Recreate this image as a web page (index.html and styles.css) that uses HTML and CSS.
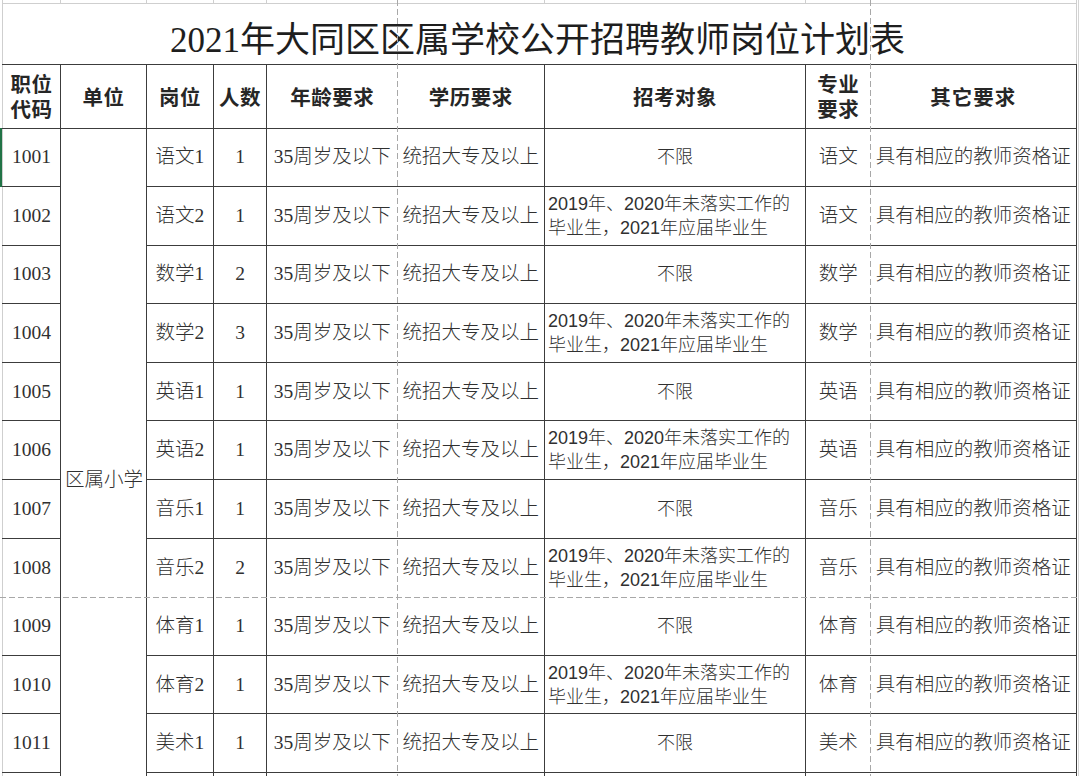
FILE: index.html
```html
<!DOCTYPE html>
<html lang="zh">
<head>
<meta charset="utf-8">
<title>2021年大同区区属学校公开招聘教师岗位计划表</title>
<link rel="stylesheet" href="styles.css">
</head>
<body>
<div class="sheet">
  <table class="plan">
    <colgroup>
      <col class="w1"><col class="w2"><col class="w3"><col class="w4"><col class="w5"><col class="w6"><col class="w7"><col class="w8"><col class="w9">
    </colgroup>
    <tr class="strip">
      <td class="g"></td><td class="g"></td><td class="g"></td><td class="g"></td><td class="g c5"></td><td class="g"></td><td class="g"></td><td class="g c8"></td><td class="g gr"></td>
    </tr>
    <tr class="title-row">
      <td class="title" colspan="9">2021年大同区区属学校公开招聘教师岗位计划表</td>
    </tr>
    <tr class="head">
      <th class="first">职位<br>代码</th>
      <th>单位</th>
      <th>岗位</th>
      <th>人数</th>
      <th class="c5">年龄要求</th>
      <th>学历要求</th>
      <th>招考对象</th>
      <th class="c8">专业<br>要求</th>
      <th class="sp">其它要求</th>
    </tr>
    <tr class="row">
      <td class="first">1001</td>
      <td class="unit" rowspan="12">区属小学</td>
      <td>语文1</td><td>1</td><td class="c5">35周岁及以下</td><td>统招大专及以上</td>
      <td class="obj">不限</td><td class="c8">语文</td><td class="other">具有相应的教师资格证</td>
    </tr>
    <tr class="row">
      <td class="first">1002</td>
      <td>语文2</td><td>1</td><td class="c5">35周岁及以下</td><td>统招大专及以上</td>
      <td class="obj multi">2019年、2020年未落实工作的<br>毕业生，2021年应届毕业生</td><td class="c8">语文</td><td class="other">具有相应的教师资格证</td>
    </tr>
    <tr class="row">
      <td class="first">1003</td>
      <td>数学1</td><td>2</td><td class="c5">35周岁及以下</td><td>统招大专及以上</td>
      <td class="obj">不限</td><td class="c8">数学</td><td class="other">具有相应的教师资格证</td>
    </tr>
    <tr class="row">
      <td class="first">1004</td>
      <td>数学2</td><td>3</td><td class="c5">35周岁及以下</td><td>统招大专及以上</td>
      <td class="obj multi">2019年、2020年未落实工作的<br>毕业生，2021年应届毕业生</td><td class="c8">数学</td><td class="other">具有相应的教师资格证</td>
    </tr>
    <tr class="row">
      <td class="first">1005</td>
      <td>英语1</td><td>1</td><td class="c5">35周岁及以下</td><td>统招大专及以上</td>
      <td class="obj">不限</td><td class="c8">英语</td><td class="other">具有相应的教师资格证</td>
    </tr>
    <tr class="row">
      <td class="first">1006</td>
      <td>英语2</td><td>1</td><td class="c5">35周岁及以下</td><td>统招大专及以上</td>
      <td class="obj multi">2019年、2020年未落实工作的<br>毕业生，2021年应届毕业生</td><td class="c8">英语</td><td class="other">具有相应的教师资格证</td>
    </tr>
    <tr class="row">
      <td class="first">1007</td>
      <td>音乐1</td><td>1</td><td class="c5">35周岁及以下</td><td>统招大专及以上</td>
      <td class="obj">不限</td><td class="c8">音乐</td><td class="other">具有相应的教师资格证</td>
    </tr>
    <tr class="row brk">
      <td class="first">1008</td>
      <td>音乐2</td><td>2</td><td class="c5">35周岁及以下</td><td>统招大专及以上</td>
      <td class="obj multi">2019年、2020年未落实工作的<br>毕业生，2021年应届毕业生</td><td class="c8">音乐</td><td class="other">具有相应的教师资格证</td>
    </tr>
    <tr class="row">
      <td class="first">1009</td>
      <td>体育1</td><td>1</td><td class="c5">35周岁及以下</td><td>统招大专及以上</td>
      <td class="obj">不限</td><td class="c8">体育</td><td class="other">具有相应的教师资格证</td>
    </tr>
    <tr class="row">
      <td class="first">1010</td>
      <td>体育2</td><td>1</td><td class="c5">35周岁及以下</td><td>统招大专及以上</td>
      <td class="obj multi">2019年、2020年未落实工作的<br>毕业生，2021年应届毕业生</td><td class="c8">体育</td><td class="other">具有相应的教师资格证</td>
    </tr>
    <tr class="row">
      <td class="first">1011</td>
      <td>美术1</td><td>1</td><td class="c5">35周岁及以下</td><td>统招大专及以上</td>
      <td class="obj">不限</td><td class="c8">美术</td><td class="other">具有相应的教师资格证</td>
    </tr>
    <tr class="row">
      <td class="first"></td>
      <td></td><td></td><td class="c5"></td><td></td>
      <td class="obj"></td><td class="c8"></td><td class="other"></td>
    </tr>
  </table>
  <div class="pb pb-v1"></div>
  <div class="pb pb-v2"></div>
  <div class="pb pb-h"></div>
  <div class="sel"></div>
</div>
</body>
</html>
```

FILE: styles.css
```css
html, body {
  margin: 0;
  padding: 0;
  background: #ffffff;
  overflow: hidden;
}

.sheet {
  position: relative;
  width: 1080px;
  height: 776px;
  overflow: hidden;
  padding-left: 2px;
  box-sizing: border-box;
  background: linear-gradient(to right, transparent 1078px, #d4d4d4 1078px 1079px, transparent 1079px);
}

.plan {
  border-collapse: collapse;
  table-layout: fixed;
  width: 1074px;
  font-family: "Liberation Serif", "Noto Sans CJK SC", serif;
  color: #2e2e2e;
}

.w1 { width: 58px; }
.w2 { width: 86px; }
.w3 { width: 67px; }
.w4 { width: 53px; }
.w5 { width: 131px; }
.w6 { width: 147px; }
.w7 { width: 261px; }
.w8 { width: 65px; }
.w9 { width: 206px; }

.plan td, .plan th {
  border: 1px solid #3c3c3c;
  padding: 0;
  text-align: center;
  vertical-align: middle;
  white-space: nowrap;
  overflow: hidden;
}

.strip { height: 3px; }
.strip td.g {
  border: 1px solid #cfcfcf;
  border-top: none;
  height: 2px;
  line-height: 0;
  font-size: 0;
}

.title-row { height: 61px; }
.plan td.title {
  border-top: 1px solid #cfcfcf;
  border-left: 1px solid #cfcfcf;
  border-right: 1px solid #cfcfcf;
  border-bottom: 1px solid #3c3c3c;
  font-size: 35px;
  font-weight: 400;
  color: #1e1e1e;
  padding-top: 5px;
  padding-right: 4px;
}

.head { height: 64px; }
.plan th {
  font-family: "Noto Sans CJK SC", sans-serif;
  font-size: 20.5px;
  font-weight: 700;
  color: #262626;
  line-height: 25px;
  letter-spacing: 0.5px;
}
.plan th.sp { letter-spacing: 1px; }

.row { height: 58.6px; }
.row td {
  font-size: 19.5px;
  font-weight: 300;
  line-height: 24px;
  color: #303030;
}

.plan .first { border-left: 1px solid #cfcfcf; }

.plan td.unit {
  vertical-align: middle;
  text-align: left;
  padding-left: 4px;
  font-size: 19.5px;
}

.plan td.obj {
  font-family: "Liberation Sans", "Noto Sans CJK SC", sans-serif;
  font-size: 18px;
}
.plan td.obj.multi {
  text-align: left;
  padding-left: 3px;
}

.plan td.other { padding-left: 0; }

/* page-break boundaries: drawn by the dashed overlay */
.plan .c5 { border-right-style: hidden; }
.plan .c8 { border-right-style: hidden; }
.plan .brk td { border-bottom-style: hidden; }

.plan td.gr { border-right: 1px solid #cfcfcf; }

.pb {
  position: absolute;
  pointer-events: none;
}
.pb-v1, .pb-v2 {
  top: 0;
  width: 1px;
  height: 776px;
  background: repeating-linear-gradient(to bottom, #a8a8a8 0 6px, transparent 6px 9px);
}
.pb-v1 { left: 397px; }
.pb-v2 { left: 870px; }
.pb-h {
  left: 0;
  top: 597px;
  width: 1080px;
  height: 1px;
  background: repeating-linear-gradient(to right, #a8a8a8 0 6px, transparent 6px 9px);
}

.sel {
  position: absolute;
  left: 0;
  top: 128px;
  width: 2px;
  height: 59px;
  background: #217346;
}
```
